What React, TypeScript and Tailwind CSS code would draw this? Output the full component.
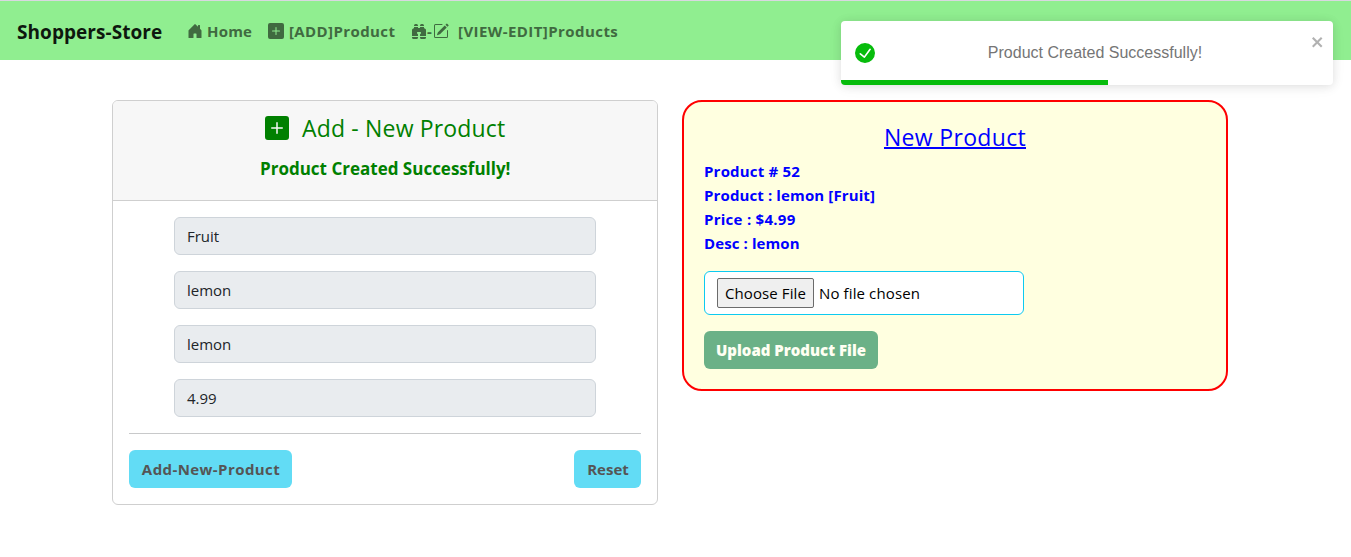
import { BsHouseDoorFill, BsPlusSquareFill, BsBinocularsFill, BsPencilSquare } from "react-icons/bs";

const fields = ["Fruit", "lemon", "lemon", "4.99"];

function Toast() {
  return (
    <div className="absolute left-[841px] top-[21px] flex h-16 w-[492px] flex-col overflow-hidden rounded bg-white font-['Liberation_Sans',sans-serif] shadow-[0_1px_10px_0_rgba(0,0,0,0.1),0_2px_15px_0_rgba(0,0,0,0.05)]">
      <div className="flex h-[59px] pl-[14px] pr-2">
        <svg viewBox="0 0 24 24" className="mt-[22px] h-5 w-5 shrink-0" fill="#07bc0c">
          <path d="M12 0a12 12 0 1012 12A12.014 12.014 0 0012 0zm6.927 8.2l-6.845 9.289a1.011 1.011 0 01-1.43.188l-4.888-3.908a1 1 0 111.25-1.562l4.076 3.261 6.227-8.451a1 1 0 111.61 1.183z" />
        </svg>
        <p className="flex-1 pl-1 pt-5 text-center text-base leading-6 text-[#757575]">Product Created Successfully!</p>
        <svg viewBox="0 0 14 16" className="mt-[13px] h-4 w-[14px] shrink-0 opacity-30" fill="#000">
          <path fillRule="evenodd" d="M7.71 8.23l3.75 3.75-1.48 1.48-3.75-3.75-3.75 3.75L1 11.98l3.75-3.75L1 4.48 2.48 3l3.75 3.75L9.98 3l1.48 1.48-3.75 3.75z" />
        </svg>
      </div>
      <div className="h-[5px] w-[267px] bg-[#07bc0c]" />
    </div>
  );
}

function Navbar() {
  return (
    <nav className="flex h-[60px] items-center border-t border-[#d8d8e0] bg-[#90ee90] pl-[17px] pt-px font-bold text-[#406a40]">
      <a className="w-[170px] whitespace-nowrap pt-px text-[19px] font-bold tracking-[0.06px] text-[#0e180e]">Shoppers-Store</a>
      <a className="flex w-[81px] items-center whitespace-nowrap">
        <BsHouseDoorFill className="mr-1 h-4 w-4 shrink-0" />
        <span className="tracking-[0.2px]">Home</span>
      </a>
      <a className="flex w-[143px] items-center whitespace-nowrap">
        <BsPlusSquareFill className="mr-[5px] h-4 w-4 shrink-0" />
        <span className="tracking-[0.4px]">[ADD]Product</span>
      </a>
      <a className="flex items-center whitespace-nowrap">
        <BsBinocularsFill className="h-4 w-4 shrink-0" />
        <span className="w-[6px]">-</span>
        <BsPencilSquare className="mr-[9px] h-4 w-4 shrink-0" />
        <span className="tracking-[0.43px]">[VIEW-EDIT]Products</span>
      </a>
    </nav>
  );
}

export default function App() {
  return (
    <div className="relative h-[557px] w-[1351px] overflow-hidden bg-white font-['Open_Sans','Noto_Sans',sans-serif] text-[15px] leading-6 text-[#212529]">
      <Navbar />
      <main className="flex items-start gap-6 pl-[112px] pt-10">
        <section className="h-[405px] w-[546px] rounded-md border border-[#cfcfcf]">
          <header className="h-[100px] rounded-t-[5px] border-b border-[#cfcfcf] bg-[#f7f7f7] text-[#008000]">
            <h1 className="flex h-[54px] items-center pl-[152px] text-[23px] font-normal">
              <BsPlusSquareFill className="mr-[13px] h-6 w-6" />
              <span className="tracking-[0.17px]">Add - New Product</span>
            </h1>
            <p className="pl-[147px] pt-0.5 text-[17px] font-bold">Product Created Successfully!</p>
          </header>
          <div className="px-4 pt-4">
            <div className="flex flex-col gap-4 px-[45px]">
              {fields.map((f, i) => (
                <div key={i} className="h-[38px] rounded-md border border-[#ced4da] bg-[#e9ecef] px-3 pt-[6px]">{f}</div>
              ))}
            </div>
            <hr className="my-4 border-[#c8c9ca]" />
            <div className="flex justify-between font-bold text-[#555]">
              <button className="h-[38px] w-[163px] rounded-md bg-[#62dcf5] pl-px tracking-[0.42px]">Add-New-Product</button>
              <button className="h-[38px] w-[67px] rounded-md bg-[#62dcf5] pl-px">Reset</button>
            </div>
          </div>
        </section>
        <section className="h-[291px] w-[546px] rounded-[20px] border-2 border-[#ff0000] bg-[#ffffe0] px-5 pt-5 font-bold text-[#0000ff]">
          <h2 className="text-center text-[23px] font-medium leading-[30px] tracking-[0.32px] underline decoration-2">New Product</h2>
          <div className="mt-[7px]">
            <p className="tracking-[0.2px]">Product # 52</p>
            <p className="tracking-[0.12px]">Product : lemon [Fruit]</p>
            <p className="tracking-[0.27px]">Price : $4.99</p>
            <p className="tracking-[0.1px]">Desc : lemon</p>
          </div>
          <div className="mt-4 flex h-11 w-[320px] items-center rounded-md border border-[#0dcaf0] bg-white pl-3 font-normal text-black">
            <button className="h-[30px] w-[97px] rounded-[2px] border border-[#6b6b6b] bg-[#efefef] tracking-[0.1px]">Choose File</button>
            <span className="ml-[5px] tracking-[0.12px]">No file chosen</span>
          </div>
          <button className="mt-4 h-[38px] w-[174px] rounded-md bg-[#6bb187] font-extrabold text-[#fffff3]">Upload Product File</button>
        </section>
      </main>
      <Toast />
    </div>
  );
}
